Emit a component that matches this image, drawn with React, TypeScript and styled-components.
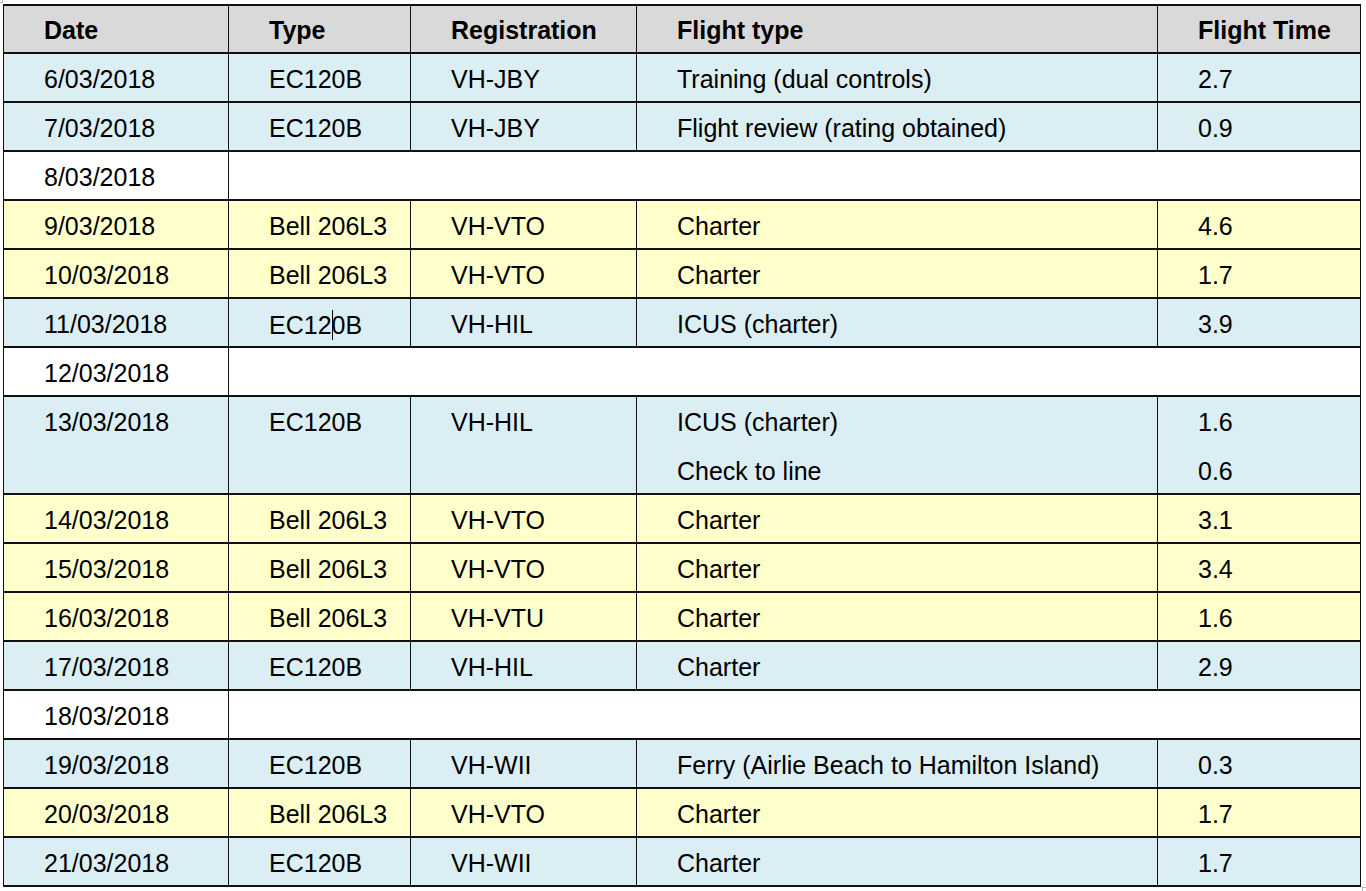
import React from "react";
import styled, { createGlobalStyle, css } from "styled-components";

type Tone = "blue" | "yellow" | "white";

type Leg = { flight: string; time: string };

type Entry = {
  date: string;
  type?: React.ReactNode;
  reg?: string;
  legs: Leg[];
  tone: Tone;
};

const GlobalStyle = createGlobalStyle`
  html, body {
    margin: 0;
    padding: 0;
    background: #ffffff;
  }
  body {
    font-family: "Liberation Sans", Arial, sans-serif;
    color: #000000;
  }
`;

const toneColor: Record<Tone, string> = {
  blue: "#daeef3",
  yellow: "#ffffcc",
  white: "#ffffff",
};

const Page = styled.div`
  position: relative;
  width: 1366px;
  height: 891px;
  box-sizing: border-box;
  padding: 4px 0 0 3px;
  overflow: hidden;
`;

const CornerMark = styled.span<{ $corner: "tl" | "br" }>`
  position: absolute;
  width: 4px;
  height: 4px;
  box-sizing: border-box;
  ${(p) =>
    p.$corner === "tl"
      ? css`
          left: -1px;
          top: -1px;
          border-right: 1px solid #b4b4b4;
          border-bottom: 1px solid #b4b4b4;
        `
      : css`
          left: 1362px;
          top: 887px;
          width: 6px;
          height: 6px;
          border-left: 1px solid #b4b4b4;
          border-top: 1px solid #b4b4b4;
        `}
`;

const Table = styled.table`
  border-collapse: separate;
  border-spacing: 0;
  table-layout: fixed;
  width: 1358px;
  border-top: 2px solid #111111;
  border-left: 1px solid #111111;
  font-family: "Liberation Sans", Arial, sans-serif;
  font-size: 25px;
  line-height: 29px;
`;

const HeadRow = styled.tr`
  height: 48px;
`;

const BodyRow = styled.tr`
  height: 49px;
`;

const Th = styled.th`
  background: #d9d9d9;
  font-weight: 700;
  text-align: left;
  vertical-align: top;
  padding: 10px 0 0 40px;
  border-right: 1px solid #111111;
  border-bottom: 2px solid #111111;
  white-space: nowrap;
  box-sizing: border-box;
`;

const Td = styled.td<{ $tone: Tone; $open?: boolean }>`
  background: ${(p) => toneColor[p.$tone]};
  vertical-align: top;
  text-align: left;
  padding: 11px 0 0 40px;
  border-right: 1px solid #111111;
  border-bottom: ${(p) => (p.$open ? "0" : "2px solid #111111")};
  white-space: nowrap;
  box-sizing: border-box;
`;

const Caret = styled.span`
  display: inline-block;
  width: 1px;
  height: 30px;
  margin-right: -1px;
  background: #000000;
  vertical-align: -6px;
`;

const entries: Entry[] = [
  { date: "6/03/2018", type: "EC120B", reg: "VH-JBY", legs: [{ flight: "Training (dual controls)", time: "2.7" }], tone: "blue" },
  { date: "7/03/2018", type: "EC120B", reg: "VH-JBY", legs: [{ flight: "Flight review (rating obtained)", time: "0.9" }], tone: "blue" },
  { date: "8/03/2018", legs: [], tone: "white" },
  { date: "9/03/2018", type: "Bell 206L3", reg: "VH-VTO", legs: [{ flight: "Charter", time: "4.6" }], tone: "yellow" },
  { date: "10/03/2018", type: "Bell 206L3", reg: "VH-VTO", legs: [{ flight: "Charter", time: "1.7" }], tone: "yellow" },
  {
    date: "11/03/2018",
    type: (
      <>
        EC12
        <Caret />
        0B
      </>
    ),
    reg: "VH-HIL",
    legs: [{ flight: "ICUS (charter)", time: "3.9" }],
    tone: "blue",
  },
  { date: "12/03/2018", legs: [], tone: "white" },
  {
    date: "13/03/2018",
    type: "EC120B",
    reg: "VH-HIL",
    legs: [
      { flight: "ICUS (charter)", time: "1.6" },
      { flight: "Check to line", time: "0.6" },
    ],
    tone: "blue",
  },
  { date: "14/03/2018", type: "Bell 206L3", reg: "VH-VTO", legs: [{ flight: "Charter", time: "3.1" }], tone: "yellow" },
  { date: "15/03/2018", type: "Bell 206L3", reg: "VH-VTO", legs: [{ flight: "Charter", time: "3.4" }], tone: "yellow" },
  { date: "16/03/2018", type: "Bell 206L3", reg: "VH-VTU", legs: [{ flight: "Charter", time: "1.6" }], tone: "yellow" },
  { date: "17/03/2018", type: "EC120B", reg: "VH-HIL", legs: [{ flight: "Charter", time: "2.9" }], tone: "blue" },
  { date: "18/03/2018", legs: [], tone: "white" },
  { date: "19/03/2018", type: "EC120B", reg: "VH-WII", legs: [{ flight: "Ferry (Airlie Beach to Hamilton Island)", time: "0.3" }], tone: "blue" },
  { date: "20/03/2018", type: "Bell 206L3", reg: "VH-VTO", legs: [{ flight: "Charter", time: "1.7" }], tone: "yellow" },
  { date: "21/03/2018", type: "EC120B", reg: "VH-WII", legs: [{ flight: "Charter", time: "1.7" }], tone: "blue" },
];

const columns = [
  { label: "Date", width: 225 },
  { label: "Type", width: 182 },
  { label: "Registration", width: 226 },
  { label: "Flight type", width: 521 },
  { label: "Flight Time", width: 203 },
];

function renderEntry(e: Entry, i: number) {
  if (e.legs.length === 0) {
    return (
      <BodyRow key={i}>
        <Td $tone={e.tone}>{e.date}</Td>
        <Td $tone={e.tone} colSpan={4} />
      </BodyRow>
    );
  }
  const span = e.legs.length;
  return e.legs.map((leg, j) => {
    const open = j < span - 1;
    return (
      <BodyRow key={`${i}-${j}`}>
        {j === 0 && (
          <>
            <Td $tone={e.tone} rowSpan={span}>
              {e.date}
            </Td>
            <Td $tone={e.tone} rowSpan={span}>
              {e.type}
            </Td>
            <Td $tone={e.tone} rowSpan={span}>
              {e.reg}
            </Td>
          </>
        )}
        <Td $tone={e.tone} $open={open}>
          {leg.flight}
        </Td>
        <Td $tone={e.tone} $open={open}>
          {leg.time}
        </Td>
      </BodyRow>
    );
  });
}

export default function App() {
  return (
    <>
      <GlobalStyle />
      <Page>
        <CornerMark $corner="tl" />
        <Table>
          <colgroup>
            {columns.map((c) => (
              <col key={c.label} style={{ width: c.width }} />
            ))}
          </colgroup>
          <thead>
            <HeadRow>
              {columns.map((c) => (
                <Th key={c.label}>{c.label}</Th>
              ))}
            </HeadRow>
          </thead>
          <tbody>{entries.map((e, i) => renderEntry(e, i))}</tbody>
        </Table>
        <CornerMark $corner="br" />
      </Page>
    </>
  );
}
